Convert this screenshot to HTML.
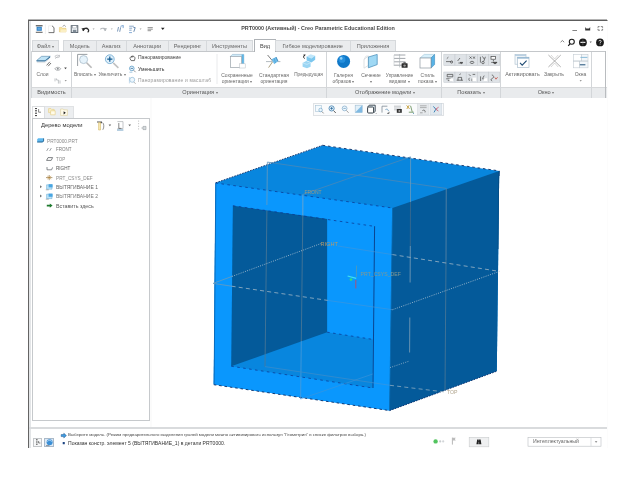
<!DOCTYPE html>
<html lang="ru"><head><meta charset="utf-8"><title>PRT0000 (Активный) - Creo Parametric Educational Edition</title>
<style>
*{box-sizing:border-box;margin:0;padding:0}
html,body{width:640px;height:480px;overflow:hidden;background:#fff}
body{position:relative;font-family:"Liberation Sans",sans-serif;font-size:5.5px;color:#555;line-height:1}
.a{position:absolute}
.t{position:absolute;white-space:nowrap}
#win{left:28px;top:20px;width:580px;height:428px;background:#fff;border-top:1px solid #5c5c5c;border-left:1px solid #646464;border-right:1px solid #fcfcfc}
.tab{position:absolute;top:40.4px;height:10.6px;background:#eaecee;border:1px solid #d6d9dc;border-bottom:none;text-align:center;padding-top:3px;font-size:5.6px;color:#666}
.tab.act{background:#fff;border-color:#aeb2b6;top:39px;height:13px;color:#444;padding-top:4px}
.sep{position:absolute;width:1px;background:#d3d6d9}
.gl{position:absolute;top:90px;font-size:5.6px;color:#555;text-align:center}
.d{font-size:3.6px;vertical-align:0.4px;color:#777}
.t,.lb,.gl,.tab{will-change:transform}
.lb{position:absolute;font-size:4.95px;color:#6a6a6a;text-align:center;white-space:nowrap}
</style></head><body>
<div id="win" class="a"></div>
<div class="a" style="left:28px;top:19px;width:579px;height:1px;background:#b4b4b4"></div>
<!-- left grey strip -->
<div class="a" style="left:29px;top:21px;width:2px;height:427px;background:#e3e5e7"></div>
<!-- title -->
<div class="t" style="left:238px;top:26.4px;width:160px;text-align:center;font-size:5.42px;font-weight:bold;color:#4a4a4a">PRT0000 (Активный) - Creo Parametric Educational Edition</div>
<!-- tabs row -->
<div class="a" style="left:31px;top:50.6px;width:575px;height:1px;background:#c4c7ca"></div>
<div class="tab" style="left:31.5px;width:27px">Файл <span class="d">▾</span></div>
<div class="tab" style="left:62.5px;width:33.5px">Модель</div>
<div class="tab" style="left:95.5px;width:30.5px">Анализ</div>
<div class="tab" style="left:125.5px;width:42.5px">Аннотации</div>
<div class="tab" style="left:167.5px;width:39px">Рендеринг</div>
<div class="tab" style="left:206px;width:47px">Инструменты</div>
<div class="tab act" style="left:253.5px;width:22px">Вид</div>
<div class="tab" style="left:275px;width:75.5px">Гибкое моделирование</div>
<div class="tab" style="left:350px;width:46px">Приложения</div>
<!-- ribbon label row -->
<div class="a" style="left:31px;top:87px;width:575.5px;height:11.2px;background:#e9ebed;border-top:1px solid #d6d8da"></div>
<div class="a" style="left:605.3px;top:51px;width:1px;height:47.2px;background:#b9bcbf"></div>
<div class="a" style="left:31.3px;top:51px;width:1px;height:47.2px;background:#d3d6d9"></div>
<div class="sep" style="left:71px;top:52px;height:46px"></div>
<div class="sep" style="left:326px;top:52px;height:46px"></div>
<div class="sep" style="left:441px;top:52px;height:46px"></div>
<div class="sep" style="left:500px;top:52px;height:46px"></div>
<div class="sep" style="left:591px;top:52px;height:46px"></div>
<div class="gl" style="left:32px;width:39px">Видимость</div>
<div class="gl" style="left:160px;width:80px">Ориентация <span class="d">▾</span></div>
<div class="gl" style="left:340px;width:90px">Отображение модели <span class="d">▾</span></div>
<div class="gl" style="left:445px;width:52px">Показать <span class="d">▾</span></div>
<div class="gl" style="left:520px;width:52px">Окно <span class="d">▾</span></div>

<!-- QAT + window controls + ribbon icons (SVG shapes only) -->
<svg class="a" style="left:0;top:0" width="640" height="100" viewBox="0 0 640 100">
 <!-- QAT -->
 <rect x="36" y="25.4" width="6.4" height="7.2" fill="#fff"/><rect x="35.8" y="25.3" width="6.8" height="1" fill="#333"/><rect x="35.8" y="31.8" width="6.8" height="0.9" fill="#444"/><rect x="36.6" y="26.8" width="5.2" height="4" fill="#2f7fc4"/><rect x="37.6" y="27.6" width="3.2" height="2.2" fill="#5fa6e0"/>
 <line x1="45.4" y1="24.5" x2="45.4" y2="34" stroke="#e6e6e6" stroke-width="0.6"/>
 <path d="M48.6 25.8h3.8l1.6 1.6v5.2h-5.4z" fill="#fff" stroke="#d6d6d6" stroke-width="0.4"/><path d="M52 25.8l2 1.9v4.9h-5.4" fill="none" stroke="#555" stroke-width="0.8"/>
 <path d="M59.4 27.4h2.4l0.7 0.9h3.5v3.6h-6.6z" fill="#f6e3a1" stroke="#e2c064" stroke-width="0.5"/><path d="M62.6 26.4l1.7-1.1 1.5 1.3" fill="none" stroke="#777" stroke-width="0.7"/><path d="M61 29.4h5.6l-0.8 2.5h-5.6z" fill="#fbefc4"/>
 <rect x="71.2" y="25.7" width="6.6" height="6.8" fill="#f2f5f8" stroke="#4a5560" stroke-width="0.9"/><rect x="72.6" y="25.8" width="3.8" height="2.2" fill="#fff" stroke="#6a7580" stroke-width="0.4"/><rect x="72.8" y="29.8" width="3.6" height="2.7" fill="#7f8b96"/>
 <path d="M83 30.8c0.6-2.6 3.6-3.4 5.2-1.4c0.9 1.2 0.3 2.4-0.6 2.6" fill="none" stroke="#2a2a2a" stroke-width="1.3"/><path d="M81.4 28.6l3.4-0.8l-0.9 3.4z" fill="#2a2a2a"/>
 <path d="M92.6 28.6h2l-1 1.2z" fill="#999"/>
 <path d="M105.6 30.8c-0.6-2.6-3.6-3.4-5.2-1.4" fill="none" stroke="#b5b9bd" stroke-width="1.2"/><path d="M107.2 28.6l-3.4-0.8l0.9 3.4z" fill="#b5b9bd"/>
 <path d="M110.8 28.6h2l-1 1.2z" fill="#aaa"/>
 <path d="M117.5 31.5l1-4.5m1.2 4.8l1-4.5" stroke="#5a7fa8" stroke-width="0.8" fill="none"/><path d="M120.5 26.3l2.8-0.8l-0.2 2.6" fill="none" stroke="#5a8fc8" stroke-width="0.8"/>
 <path d="M129.2 26.2h4.6m-4.6 2h3m-3 2h2.4" stroke="#6a8fb8" stroke-width="0.8"/><path d="M133.4 27.4l1.8 0.2l-1.4 4.2" stroke="#5a7fa8" stroke-width="0.9" fill="none"/><path d="M129 32.6h3" stroke="#5a8fc8" stroke-width="0.7"/>
 <path d="M139.6 28.6h2l-1 1.2z" fill="#999"/>
 <path d="M147.6 27.6h5.2m-5.2 1.6h5.2m-5.2 1.5h3.5" stroke="#666" stroke-width="0.7"/>
 <path d="M161 27.8h3.6l-1.8 2.3z" fill="#222"/>
 <!-- window controls -->
 <rect x="572.4" y="30" width="4.6" height="0.9" fill="#777"/>
 <path d="M585.2 27v3.6h5v-3.6l-1.1 1.5h-2.8z" fill="#333"/>
 <path d="M598 26.6h1.6m1.2 0h1.8v1.2m0 1v1.4h-1.4m-1.2 0h-2v-1.4m0-1v-1.2" stroke="#666" stroke-width="0.8" fill="none"/>
 <path d="M560.6 42.2l1.8-1.7l1.8 1.7" fill="none" stroke="#666" stroke-width="0.8"/>
 <circle cx="571.8" cy="41.8" r="2.5" fill="none" stroke="#1a1a1a" stroke-width="1.1"/><path d="M570 43.8l-1.8 2" stroke="#1a1a1a" stroke-width="1.2"/>
 <circle cx="582.9" cy="42.4" r="3.9" fill="#1a1a1a"/><rect x="580.4" y="41.8" width="5" height="1.1" fill="#fff"/><path d="M582.9 39.6v5.6" stroke="#888" stroke-width="0.5"/>
 <path d="M589.6 41.6h2.2l-1.1 1.3z" fill="#666"/>
 <circle cx="600" cy="42.4" r="3.9" fill="#1a1a1a"/><path d="M598.9 41.3c0-1.4 2.3-1.4 2.3 0c0 0.8-1.1 0.8-1.1 1.8" stroke="#fff" stroke-width="0.8" fill="none"/><rect x="599.7" y="43.7" width="0.8" height="0.8" fill="#fff"/>

 <!-- Visibility group -->
 <path d="M36.6 60.5l5-4.2h8.6l-5 4.2z" fill="#bfe3f6" stroke="#3b6f96" stroke-width="0.5"/><path d="M36.6 60.5h8.6l5-4.2v1.1l-5 4.2h-8.6z" fill="#2f6f9c"/><path d="M36.8 62.6h8l4.6-3.8" fill="none" stroke="#d9dcdf" stroke-width="0.8"/><path d="M46.6 65.4l3.2-3.6m-1.6 4.4l2.8-3.2" stroke="#333" stroke-width="0.7"/>
 <path d="M54.8 56.4c1.2-1.6 4-1.6 5.2 0c-1.2 1.6-4 1.6-5.2 0z" fill="none" stroke="#a9adb1" stroke-width="0.6"/><path d="M55 58.6l5-3.6" stroke="#a9adb1" stroke-width="0.6"/>
 <path d="M54.8 68.8c1.3-2 4.6-2 6 0c-1.4 2-4.7 2-6 0z" fill="none" stroke="#8c9094" stroke-width="0.7"/><circle cx="57.8" cy="68.8" r="1" fill="#8c9094"/>
 <path d="M64.2 67.6h2.6l-1.3 1.7z" fill="#444"/>
 <path d="M55 78.4v3m1.4-3v1.6h2v3.6m1.6-3.2v3.2" stroke="#a9adb1" stroke-width="0.7" fill="none"/>
 <path d="M64.6 80h2.2l-1.1 1.4z" fill="#999"/>

 <!-- Refit -->
 <path d="M77.6 66v-11.6h9.8" fill="none" stroke="#8d9499" stroke-width="0.9"/><circle cx="83.6" cy="59.6" r="4" fill="#e6f3fb" stroke="#9fb4c4" stroke-width="0.7"/><path d="M86.6 62.8l5 5" stroke="#b9b9b9" stroke-width="1.6"/>
 <!-- Zoom in -->
 <circle cx="109.8" cy="59.2" r="4.4" fill="#dff0fb" stroke="#6aa6cf" stroke-width="0.8"/><path d="M107.2 59.2h5.2m-2.6-2.6v5.2" stroke="#12598f" stroke-width="1.2"/><path d="M113.2 62.8l5.2 5" stroke="#c2c2c2" stroke-width="1.6"/>
 <!-- small icons -->
 <path d="M130 58.6c0-3 4.8-3.4 5 -0.4l-0.6 2.4h-3.2z" fill="#fff" stroke="#333" stroke-width="0.7"/><path d="M131.4 56.2v1.6m1.3-2v1.8" stroke="#333" stroke-width="0.5"/>
 <circle cx="131.8" cy="68.4" r="2.3" fill="#eaf5fc" stroke="#4a90c0" stroke-width="0.7"/><path d="M130.6 68.4h2.4" stroke="#1c5f93" stroke-width="0.7"/><path d="M133.6 70.2l2 2" stroke="#888" stroke-width="0.9"/><path d="M129.4 72.2h3" stroke="#4a90c0" stroke-width="0.5"/>
 <circle cx="132.2" cy="79.8" r="2.5" fill="#eef7fd" stroke="#8fb9d6" stroke-width="0.7"/><path d="M129.4 77v6.4" stroke="#9fc3dc" stroke-width="0.6"/><path d="M133.8 82l1.8 1.8" stroke="#aaa" stroke-width="0.9"/>
 <line x1="217" y1="54" x2="217" y2="84" stroke="#e3e5e7" stroke-width="0.8"/>
 <!-- Saved orientations -->
 <path d="M230.4 56.4l2-2h11.4v11l-2 2z" fill="#cfeaf8" stroke="#8db4cc" stroke-width="0.6"/><path d="M241.6 54.4h2.2v11l-2.2 2z" fill="#5fb4e2"/><rect x="230.4" y="56.6" width="11.2" height="10.8" fill="#fff" stroke="#9aa3ab" stroke-width="0.7"/><rect x="239.6" y="63.8" width="5.6" height="4.2" fill="#fff" stroke="#b5bcc2" stroke-width="0.5"/>
 <!-- Standard orientation -->
 <path d="M267.6 55l5 6" stroke="#444" stroke-width="0.7"/><path d="M266 61.6h14.4" stroke="#7f8c96" stroke-width="0.6"/><path d="M268.6 67.6l3.8-5.6" stroke="#8a7a4a" stroke-width="0.7"/><path d="M271.6 59.2l4.4-2.2l2 4.2l-3.8 3z" fill="#6fbdea"/><path d="M276 57l2 4.2" stroke="#2a78b0" stroke-width="0.8"/><path d="M274 58l1.6 5" stroke="#3f95cc" stroke-width="0.5"/>
 <!-- Previous -->
 <path d="M306.6 56.6l4-2.4l4.6 1.6l-3.8 2.8z" fill="#bfe6fa"/><path d="M306.6 56.6l4.8 2l3.8-2.8v4l-3.8 2.8l-4.8-2z" fill="#7cc7ee"/><path d="M302.6 63l3.6-2l4.4 1.6v4.2l-3.6 1.4l-4.4-1.4z" fill="#9ad5f3"/><path d="M302.6 63l4.4 1.4l3.6-1.8" fill="none" stroke="#d8effb" stroke-width="0.6"/><path d="M304.8 58.6c-1.6-0.6-1.8-2.6-0.4-3.4" fill="none" stroke="#222" stroke-width="0.8"/><path d="M303.4 54.4l2.2 0.2l-1 1.8z" fill="#222"/>
 <!-- Appearance gallery sphere -->
 <circle cx="343.6" cy="61.4" r="6.5" fill="#0f78c8"/><circle cx="342" cy="59.4" r="3.4" fill="#2a95e2" opacity="0.8"/><circle cx="341.2" cy="58.4" r="1.3" fill="#8fd0f8"/>
 <!-- Section -->
 <path d="M364 59.4l4.4-3.4v9.4l-4.4 2.8z" fill="#fff" stroke="#c8ccd0" stroke-width="0.6"/><path d="M368.4 57l8.8-2.6v10.2l-8.8 3.2z" fill="#9fd8f4" stroke="#3f87b5" stroke-width="0.7"/><path d="M364 59.4l2-3.4l2.4 0" fill="none" stroke="#c8ccd0" stroke-width="0.5"/>
 <!-- View manager -->
 <path d="M394 55h11.4m-11.4 3.4h11.4m-11.4 3.4h11.4m-11.4 3.4h8" stroke="#8a9197" stroke-width="0.8"/><path d="M399.6 54v13.4" stroke="#aeb4b9" stroke-width="0.7"/><path d="M394 55v11" stroke="#c5c9cd" stroke-width="0.6"/><rect x="401.6" y="63.2" width="6" height="4.6" rx="0.6" fill="#2e2e2e"/><circle cx="404.6" cy="65.6" r="1.2" fill="#9a9a9a"/><rect x="403.4" y="62.4" width="2.4" height="1" fill="#2e2e2e"/>
 <!-- Display style -->
 <path d="M420 58l4.2-3.6h10.4l-3.6 3.6z" fill="#d8f0fb" stroke="#8fbad2" stroke-width="0.5"/><path d="M431 58l3.6-3.6v10.2l-3.6 3.4z" fill="#58b3e6" stroke="#2f7fb2" stroke-width="0.5"/><rect x="420" y="58" width="11" height="10" fill="#fff" stroke="#8d97a0" stroke-width="0.7"/>
 <!-- Show grid -->
 <g fill="#dfe3e7" stroke="#c3c8cd" stroke-width="0.5">
  <rect x="443.8" y="54.2" width="11.2" height="11.4"/><rect x="455" y="54.2" width="11.2" height="11.4"/><rect x="466.2" y="54.2" width="11.2" height="11.4"/><rect x="477.4" y="54.2" width="11.2" height="11.4"/><rect x="488.6" y="54.2" width="11.2" height="11.4"/>
  <rect x="443.8" y="72" width="11.2" height="10.4"/><rect x="455" y="72" width="11.2" height="10.4"/><rect x="466.2" y="72" width="11.2" height="10.4"/><rect x="477.4" y="72" width="11.2" height="10.4"/><rect x="488.6" y="72" width="11.2" height="10.4"/>
 </g>
 <g stroke="#444" stroke-width="0.7" fill="none">
  <path d="M446 61.6h5.4m-4.6-3l1.6-1.4"/><circle cx="451.6" cy="62" r="1.1"/>
  <path d="M457.6 61l2.4-3m-1.6 5h4.6"/><path d="M460 62.4h2.6l-1.3 1.2z" fill="#333"/>
  <path d="M469.6 56.6l2 2m0-2l-2 2m3.6-2l1.6 2m0-2l-1.6 2"/><ellipse cx="472" cy="62.4" rx="1.8" ry="1.1"/>
  <path d="M480.4 56.8v5.8m2-6.2l1.8 2.6m1.2-2.2l-1.6 4.4"/><circle cx="483" cy="62.6" r="1.2"/>
  <rect x="491" y="56.4" width="4.6" height="2.8" fill="#fff"/><path d="M493.4 59.8v1.6m-2.2 1h6"/><path d="M493 62.4h4l-2 1.6z" fill="#333"/>
  <path d="M447.2 74.4h5.6v2.4h-5.6zm-1 4.4h4.6m-3 1.8h4.2"/><rect x="449.4" y="78.6" width="3.6" height="2.6" fill="#fff" stroke="none"/>
  <path d="M459.4 74.6l1.4-0.8m-2.8 6.6v-3h3.6v3m-5-0.2h6.4"/>
  <path d="M469 74.4l1.6 1.6m2-1.6h2.6m-5.6 3.4c-1 1-1 2 0 3m2.4-2.2v2.6"/><rect x="472.4" y="77.6" width="3.8" height="3.4" fill="#fff" stroke="none"/>
  <path d="M480.6 76.4v4.6m2-2.6l1.6-2.8m-2 3.2h3"/><rect x="483.8" y="78.2" width="3.4" height="2.8" fill="#fff" stroke="none"/>
  <path d="M491.8 75c2.4 0.4 2.4 2.8 0.4 3.4c-1.6 0.6-1.4 2.2 0 2.6"/><path d="M494.8 77.4l1.2 1.8l1.6-2" stroke="#c0392b"/>
 </g>
 <!-- Activate -->
 <rect x="515" y="54.6" width="11" height="9.6" fill="#f4f8fb" stroke="#a8bccb" stroke-width="0.6"/><rect x="515" y="54.6" width="11" height="1.3" fill="#b5cde0"/><rect x="517.4" y="57.2" width="11.6" height="10.4" fill="#fff" stroke="#9fb5c6" stroke-width="0.6"/><rect x="517.4" y="57.2" width="11.6" height="1.4" fill="#8fb4d0"/><path d="M520 62.8l2.2 2.4l4.4-4.6" fill="none" stroke="#1d4a73" stroke-width="1.1"/>
 <!-- Close -->
 <path d="M548.4 55l12.4 12m0-12l-12.4 12" stroke="#9a9a9a" stroke-width="0.8"/><path d="M551 55l3.6 4l3.6-4m-7.2 12l3.6-4l3.6 4" fill="none" stroke="#bdbdbd" stroke-width="0.6"/>
 <!-- Windows -->
 <rect x="573.6" y="54.4" width="8" height="6.4" fill="#fff" stroke="#c3ccd3" stroke-width="0.6"/><rect x="581.6" y="54.4" width="6.4" height="6.4" fill="#f3f7fa" stroke="#c3ccd3" stroke-width="0.6"/><rect x="573.6" y="61.6" width="6" height="6.2" fill="#fff" stroke="#c3ccd3" stroke-width="0.6"/><rect x="579.6" y="61.6" width="8.4" height="6.2" fill="#f3f7fa" stroke="#c3ccd3" stroke-width="0.6"/><path d="M580.4 57.4h7" stroke="#7fb6d6" stroke-width="0.9"/><path d="M579.8 64.8h5.6" stroke="#1e5079" stroke-width="1"/>
 <path d="M579.6 80.2h2.2l-1.1 1.4z" fill="#777"/>
</svg>
<!-- ribbon labels -->
<div class="lb" style="left:32px;top:72.5px;width:21px">Слои</div>
<div class="lb" style="left:72px;top:72.5px;width:26px">Вписать <span class="d">▾</span></div>
<div class="lb" style="left:98px;top:72.5px;width:28px">Увеличить <span class="d">▾</span></div>
<div class="t" style="left:138.4px;top:55px;font-size:5.02px;color:#444">Панорамирование</div>
<div class="t" style="left:138.4px;top:67px;font-size:5.05px;color:#333">Уменьшить</div>
<div class="t" style="left:138.4px;top:78.8px;font-size:4.9px;color:#999;letter-spacing:0.22px">Панорамирование и масштаб</div>
<div class="lb" style="left:217px;top:72.5px;width:40px;line-height:6.1px">Сохраненные<br>ориентации <span class="d">▾</span></div>
<div class="lb" style="left:254px;top:72.5px;width:40px;line-height:6.1px">Стандартная<br>ориентация</div>
<div class="lb" style="left:290px;top:72.7px;width:37px;font-size:4.7px">Предыдущая</div>
<div class="lb" style="left:327px;top:72.5px;width:33px;line-height:6.1px">Галерея<br>образов <span class="d">▾</span></div>
<div class="lb" style="left:357px;top:72.5px;width:28px;line-height:6.1px">Сечение<br><span class="d">▾</span></div>
<div class="lb" style="left:383px;top:72.5px;width:33px;line-height:6.1px">Управление<br>видами <span class="d">▾</span></div>
<div class="lb" style="left:413px;top:72.5px;width:29px;line-height:6.1px">Стиль<br>показа <span class="d">▾</span></div>
<div class="lb" style="left:503px;top:72.3px;width:39px;font-size:5.45px">Активировать</div>
<div class="lb" style="left:541px;top:72.4px;width:26px;font-size:5.2px">Закрыть</div>
<div class="lb" style="left:570px;top:72.5px;width:21px">Окна</div>


<!-- navigator -->
<div class="a" style="left:32px;top:105.5px;width:41.5px;height:13px;background:#eceef0;border:1px solid #e0e2e4;border-bottom:none"></div>
<div class="a" style="left:32px;top:105.5px;width:12.5px;height:13.5px;background:#fff;border:1px solid #dcdee0;border-bottom:none"></div>
<div class="a" style="left:31.5px;top:118.3px;width:118.5px;height:303px;background:#fff;border:1px solid #c6c9cc"></div>
<div class="a" style="left:150px;top:98px;width:1.5px;height:330px;background:#fbfbfb"></div>
<svg class="a" style="left:0;top:100px" width="160" height="120" viewBox="0 100 160 120">
 <!-- tab icons -->
 <path d="M35 108.6h2m-2 2.2h2m-2 2.4h2m-2 2.4h2" stroke="#333" stroke-width="1"/><path d="M38.6 109v3.2h2.4m-2.4 0v0" stroke="#555" stroke-width="0.7" fill="none"/>
 <path d="M48.6 108.6h2.4l0.6 0.8h2.6v3.2h-5.6z" fill="#fbf1cc" stroke="#e0c46a" stroke-width="0.5"/><path d="M50.6 110.8h4.6v4h-4.6z" fill="#fffbe8" stroke="#e0c46a" stroke-width="0.5"/>
 <path d="M60.6 109h2.6l0.6 0.8h3.6v5.6h-6.8z" fill="#fffbea" stroke="#d8c68a" stroke-width="0.5"/><path d="M63.6 111.2l2.2 1.6l-2.2 1.6z" fill="#222"/>
 <!-- tree toolbar -->
 <path d="M97 121.4h5v1.8h-1.4l-0.6-0.8h-3z" fill="#555"/><path d="M98.6 122.6h1.9v7.4h-1.9z" fill="#f9ebb4" stroke="#cfae52" stroke-width="0.5"/><path d="M102.6 122.6c1.6 1.2 1.6 5 0.2 7.2" fill="none" stroke="#666" stroke-width="0.7"/>
 <path d="M108.6 124.6h2.6l-1.3 1.6z" fill="#666"/>
 <path d="M117.4 121.6h5.6v7h-5.6" fill="none" stroke="#9aa0a5" stroke-width="0.6"/><path d="M118.8 123v5.4h2.6" stroke="#555" stroke-width="0.7" fill="none"/><path d="M117 130h6.4" stroke="#4d88b5" stroke-width="0.8"/>
 <path d="M128.4 124.6h2.6l-1.3 1.6z" fill="#666"/>
 <path d="M138.6 120.6v1m0 1.6v1m0 1.6v1m0 1.6v1" stroke="#aaa" stroke-width="0.8"/><path d="M143 126.4h3v3.2h-3z" fill="#d9dde0" stroke="#8a9096" stroke-width="0.5"/><path d="M141.4 128h1.6" stroke="#8a9096" stroke-width="0.6"/>
 <!-- tree icons -->
 <path d="M37.2 139.2l1-1h5.4v3l-1 1h-5.4z" fill="#5fb8ee"/><path d="M37.2 142h5.4l1-1v-2.6" stroke="#14507f" stroke-width="0.8" fill="none"/>
 <path d="M46.6 151l1.8-3m1.2 3l1.8-3" stroke="#7a7f85" stroke-width="0.7"/>
 <path d="M46.6 160.4l1.4-2.8h4.6l-1.4 2.8z" fill="none" stroke="#4a4f55" stroke-width="0.7"/>
 <path d="M47 167v2.8h4.6l1-2.4" fill="none" stroke="#5a5f65" stroke-width="0.7"/>
 <path d="M46 177.6h6.4m-3.2-2.6v5.2" stroke="#7a5a20" stroke-width="0.6"/><path d="M47.2 176l4 3.2m0-3.2l-4 3.2" stroke="#c98a2a" stroke-width="0.5"/>
 <path d="M40 185.2l2 1.5l-2 1.5z" fill="#777"/><path d="M40 194.6l2 1.5l-2 1.5z" fill="#777"/>
 <path d="M46.6 184.8h5.4v4.4h-5.4z" fill="#bfe4f8" stroke="#5fa6d2" stroke-width="0.5"/><path d="M48.6 184.2h4v3.2h-4z" fill="#49a6e2"/><path d="M45.8 189.8h3" stroke="#888" stroke-width="0.6"/>
 <path d="M46.6 194.2h5.4v4.4h-5.4z" fill="#bfe4f8" stroke="#5fa6d2" stroke-width="0.5"/><path d="M48.6 193.6h4v3.2h-4z" fill="#49a6e2"/><path d="M45.8 199.2h3" stroke="#888" stroke-width="0.6"/>
 <path d="M46.8 204.8h3v-1.4l2.8 2.2l-2.8 2.2v-1.4h-3z" fill="#1e7a2e"/>
</svg>
<div class="t" style="left:41px;top:122.6px;font-size:5.8px;color:#333">Дерево модели</div>
<div class="t" style="left:47px;top:139.6px;font-size:4.76px;color:#888">PRT0000.PRT</div>
<div class="t" style="left:56px;top:148.3px;font-size:4.5px;color:#777">FRONT</div>
<div class="t" style="left:56px;top:157.5px;font-size:4.5px;color:#888">TOP</div>
<div class="t" style="left:56px;top:167.4px;font-size:4.6px;color:#555">RIGHT</div>
<div class="t" style="left:56px;top:176.9px;font-size:4.7px;color:#888">PRT_CSYS_DEF</div>
<div class="t" style="left:56px;top:185.3px;font-size:5.03px;color:#666">ВЫТЯГИВАНИЕ 1</div>
<div class="t" style="left:56px;top:194.4px;font-size:5.03px;color:#777">ВЫТЯГИВАНИЕ 2</div>
<div class="t" style="left:56px;top:203.6px;font-size:5.3px;color:#555">Вставить здесь</div>


<!-- graphics toolbar -->
<div class="a" style="left:312.5px;top:102.5px;width:131px;height:13px;background:#fafbfc;border:0.6px solid #dfe2e5"></div>
<svg class="a" style="left:300px;top:98px" width="160" height="24" viewBox="300 98 160 24">
 <rect x="417.4" y="103.4" width="11.6" height="11.4" fill="#e6e9ec" stroke="#d3d8dc" stroke-width="0.5"/><rect x="430.2" y="103.4" width="11.6" height="11.4" fill="#e1e8ee" stroke="#cad3db" stroke-width="0.5"/>
 <rect x="315.6" y="105.4" width="6" height="6" fill="#f4fafe" stroke="#a9c3d6" stroke-width="0.6"/><circle cx="320.6" cy="110" r="1.8" fill="#eaf5fc" stroke="#6a9fc4" stroke-width="0.6"/><path d="M322 111.6l1.6 1.8" stroke="#777" stroke-width="0.8"/>
 <circle cx="331.6" cy="108.4" r="2.6" fill="#e6f3fb" stroke="#3f7fae" stroke-width="0.8"/><path d="M330.2 108.4h2.8m-1.4-1.4v2.8" stroke="#1c5f93" stroke-width="0.7"/><path d="M333.6 110.6l2.2 2.4" stroke="#666" stroke-width="1"/>
 <circle cx="344.6" cy="108.4" r="2.4" fill="#eef7fd" stroke="#7fa9c8" stroke-width="0.7"/><path d="M343.4 108.4h2.4" stroke="#4a86b3" stroke-width="0.6"/><path d="M346.4 110.4l2.2 2.4" stroke="#999" stroke-width="0.9"/>
 <rect x="355.2" y="105.2" width="7" height="7.4" fill="#e2f0f9" stroke="#9fbdd2" stroke-width="0.6"/><path d="M355.2 112.6l7-7.4v7.4z" fill="#7fb9e2"/>
 <path d="M367.6 107l1.6-1.8h6v6l-1.6 1.8" fill="#e8f4fb" stroke="#1f2a33" stroke-width="0.8"/><rect x="367.6" y="107" width="6" height="6" rx="0.8" fill="#fff" stroke="#1f2a33" stroke-width="0.9"/><path d="M375.6 113.2h1l-0.5 0.8z" fill="#333"/>
 <path d="M382 112.6v-6.4h5.4" fill="none" stroke="#7f8c96" stroke-width="0.8"/><path d="M385.4 109.6c1.4-1 3-0.2 3 1.4" fill="none" stroke="#4a86b3" stroke-width="0.7"/><path d="M387.2 113.4h1.8v-1.6" stroke="#333" stroke-width="0.7" fill="none"/>
 <path d="M394 106.2h7m-7 1.8h7m-7 1.8h4" stroke="#9aa0a5" stroke-width="0.6"/><rect x="396.8" y="109" width="5" height="3.8" fill="#333"/><circle cx="399.3" cy="111" r="1" fill="#aaa"/>
 <path d="M406.6 105.4l3 3.6m-0.4-3.8l-2.4 3.8" stroke="#b8860b" stroke-width="0.7"/><path d="M410.6 105.8l1.6 6m-3.4 0.4h5" stroke="#4a7a3a" stroke-width="0.7"/><path d="M412.8 112.8l1.2 1.2" stroke="#3f7fae" stroke-width="0.7"/>
 <path d="M420 105.8h6.6m-6.6 1.8h6.6" stroke="#888" stroke-width="0.6"/><path d="M422.4 110.6c1.6-1.2 3.4 0 2.6 1.8" fill="none" stroke="#444" stroke-width="0.7"/><path d="M420 112.8h2.6" stroke="#777" stroke-width="0.6"/>
 <path d="M433.4 106.4l2.4 2.8l-1.8 3.2" fill="none" stroke="#2a78b0" stroke-width="0.9"/><path d="M435.8 109.2l2.8-2m-2.8 2l2.6 1.8" stroke="#c8506a" stroke-width="0.8" fill="none"/>
</svg>
<!-- 3D model -->
<svg class="a" style="left:150px;top:98px" width="458" height="330" viewBox="150 98 458 330">
 <!-- silhouette underlay -->
 <polygon points="215.5,183 322.6,145.4 499.25,171 496.8,371 389.6,410.4 213.75,384.5" fill="#0886de"/>
 <!-- front face -->
 <polygon points="215.5,183 392.5,208 389.6,410.4 213.75,384.5" fill="#0a97fd"/>
 <!-- right face -->
 <polygon points="392.5,208 499.25,171 496.8,371 389.6,410.4" fill="#045a9a"/>
 <polygon points="392.9,208 392.1,208.2 389.2,410.3 390,410.3" fill="#0a6ab0"/>
 <!-- inner left wall + floor underlay -->
 <polygon points="232.9,205.7 327.1,218.9 327.1,332.2 372.75,339.4 372.9,388 231.25,366.25" fill="#0886de"/>
 <polygon points="232.9,205.7 327.1,218.9 327.1,332.2 231.25,366.25" fill="#045a9a"/>
 <!-- edges -->
 <g fill="none" stroke="#0c3a94" stroke-width="0.9" stroke-dasharray="2.6 3.4" opacity="0.85">
  <path d="M215.5,183 392.5,208"/>
  <path d="M232.9,205.7 374.8,226.4"/>
  <path d="M231.25,366.25 372.9,388"/>
  <path d="M327.1,332.2 372.75,339.4"/>
 </g>
 <g fill="none" stroke="#0a2c66" stroke-width="1" opacity="0.9">
  <path d="M215.7,182.8 322.6,145.3" stroke-dasharray="1.7 1.1"/>
  <path d="M322.6,145.3 499.25,170.9" stroke-dasharray="2.6 2.8"/>
  <path d="M213.75,384.7 389.6,410.6" stroke-dasharray="2.6 2.8"/>
  <path d="M389.6,410.6 496.8,371.2" stroke-dasharray="1.7 1.1"/>
 </g>
 <path d="M215.8,183.5 L214.1,384" stroke="#0b66b4" stroke-width="0.9" fill="none"/>
 <path d="M374.6,226.2 L373,388" stroke="#0a4590" stroke-width="1" fill="none"/>
 <path d="M499.25,171 L499.1,176" stroke="#0a3f78" stroke-width="1" fill="none"/><path d="M498.6,176 L498,249" stroke="#084a80" stroke-width="0.8" fill="none"/>

 <!-- datum planes -->
 <g fill="none" stroke-width="0.8">
  <path d="M267.4,162.1 L446.25,188.4" stroke="#4a88b8"/>
  <path d="M302.9,194.4 L410.6,156.9" stroke="#4a88b8"/>
  <path d="M267.4,162.1 L266.9,205" stroke="#6a9abc"/>
  <path d="M266.9,210.5 L265,366.6" stroke="#4f7896"/>
  <path d="M302.9,194.4 L302.8,215.5" stroke="#7aa6c6"/>
  <path d="M302.8,215.5 L301.3,341" stroke="#4f7896"/>
  <path d="M301.3,341 L300.6,399" stroke="#4a9ad8"/>
  <path d="M410.6,156.9 L410.5,202" stroke="#6a9abc"/>
  <path d="M410.5,202 L410.3,246" stroke="#3f6a8c"/>
  <path d="M410.3,246 L410.1,282.5" stroke="#7f9fb8"/>
  <path d="M409.8,317.5 L409.6,352.5" stroke="#7f9fb8"/>
  <path d="M446.25,188.4 L446,260" stroke="#5f86a4"/>
  <path d="M446,260 L445,391" stroke="#4f7896"/>
  <path d="M265,366.6 L372,382.6" stroke="#3f8cc8" stroke-width="0.7"/>
  <path d="M300.6,399 L372.7,374" stroke="#3f93d8" stroke-width="0.6"/>
  <path d="M372,382.6 L390,385.3" stroke="#4596d8" stroke-width="0.6"/>
  <path d="M390,385.3 L445,392" stroke="#9fb6c6" stroke-dasharray="4 3.2" stroke-width="0.7"/>
  <path d="M390,367.6 L409.5,361" stroke="#b5c7d4" stroke-dasharray="1 1.3" stroke-width="0.7"/>
  <!-- TOP plane -->
  <path d="M213.1,283.4 L232,276.4" stroke="#6a9abc"/>
  <path d="M232,276.4 L321,243.5" stroke="#b5c7d4" stroke-dasharray="1 1.3"/>
  <path d="M213.1,283.4 L231.6,286.2" stroke="#6a9abc"/>
  <path d="M231.6,286.2 L327.7,300.4" stroke="#9fb6c6" stroke-dasharray="4 3.2"/>
  <path d="M327.7,300.4 L392.5,309.7" stroke="#4596d8" stroke-width="0.6"/>
  <path d="M338,246 L392.5,254.6" stroke="#4596d8" stroke-width="0.6"/>
  <path d="M392.5,254.6 L499.4,271.4" stroke="#9fb6c6" stroke-dasharray="4 3.2"/>
  <path d="M392.5,309.7 L499.4,271.4" stroke="#b5c7d4" stroke-dasharray="1 1.3"/>
  <path d="M392.2,243 L430,229" stroke="#8fa9bc" stroke-dasharray="1 1.3" stroke-width="0.6" opacity="0"/>
 </g>
 <!-- csys -->
 <path d="M356.5,265.6 L356.4,277" stroke="#6f9a9a" stroke-width="0.6"/>
 <path d="M347.6,276 L356.2,278.4" stroke="#3fe0f0" stroke-width="1.2"/>
 <circle cx="351" cy="279.6" r="1.4" fill="#2fd880"/>
 <path d="M355.8,280 L355.8,288.4" stroke="#c04a6a" stroke-width="0.9"/>
 <text x="304.4" y="193.6" font-family="Liberation Sans, sans-serif" font-size="5" fill="#9c9a80">FRONT</text>
 <text x="320.5" y="245.8" font-family="Liberation Sans, sans-serif" font-size="5.6" fill="#b59a6a">RIGHT</text>
 <text x="360.6" y="275.6" font-family="Liberation Sans, sans-serif" font-size="5.15" fill="#86998f">PRT_CSYS_DEF</text>
 <text x="447" y="394" font-family="Liberation Sans, sans-serif" font-size="5.2" fill="#b0a48c">TOP</text>
</svg>


<!-- status bar -->
<div class="a" style="left:29px;top:427.2px;width:578px;height:2.2px;background:#d9dbdd"></div>
<div class="a" style="left:32.8px;top:437.8px;width:9.4px;height:9px;background:#f6f7f8;border:0.6px solid #c3c6c9"></div>
<div class="a" style="left:44.4px;top:437.8px;width:10px;height:9px;background:#dfeaf5;border:0.6px solid #a9b9c9"></div>
<svg class="a" style="left:0;top:425px" width="640" height="30" viewBox="0 425 640 30">
 <path d="M36 439.8h1.6m-1.6 2.2h1.6m-1.6 2.2h1.6" stroke="#333" stroke-width="0.9"/><path d="M38.6 441v2h1.8" stroke="#555" stroke-width="0.7" fill="none"/>
 <circle cx="49.6" cy="442.2" r="3" fill="#3b8fd6"/><path d="M47.2 441.6c1-1.6 3.8-1.6 4.8 0" stroke="#cfe6f8" stroke-width="0.7" fill="none"/><path d="M46 445.6h3.4" stroke="#555" stroke-width="0.6"/>
 <path d="M61.2 434.6h2.6v-1.3l2.6 2.3l-2.6 2.3v-1.3h-2.6z" fill="#3f9fe6" stroke="#1a4f86" stroke-width="0.5"/>
 <rect x="62.7" y="442" width="2.1" height="2.2" rx="0.5" fill="#1d4583"/>
 <circle cx="435.6" cy="441.4" r="2.2" fill="#52c45e"/><circle cx="440.2" cy="441.4" r="1.1" fill="#c9cdd0"/><circle cx="443.2" cy="441.4" r="1.1" fill="#d3d6d9"/>
 <path d="M452.4 437.6v7" stroke="#999" stroke-width="0.7"/><path d="M452.6 437.8h3.2l-1 1.3l1 1.3h-3.2z" fill="#bbb"/>
 <rect x="469.2" y="437.4" width="19.6" height="9.4" fill="#eff0f1" stroke="#c9ccce" stroke-width="0.6"/>
 <path d="M477.2 439.6h1.5v4.6h-2.3zm3.4 0h-1.5v4.6h2.3z" fill="#222"/><rect x="478.2" y="440.6" width="1.6" height="1.4" fill="#222"/>
 <rect x="528" y="437.4" width="73" height="8.8" fill="#fff" stroke="#b9bdc1" stroke-width="0.6"/><line x1="591" y1="437.4" x2="591" y2="446.2" stroke="#c9cdd1" stroke-width="0.6"/>
 <path d="M594.8 441.2h2.6l-1.3 1.6z" fill="#777"/>
</svg>
<div class="t" style="left:68.3px;top:433.2px;font-size:4.4px;color:#4a4a4a;letter-spacing:-0.03px">Выберите модель. (Режим предварительного выделения граней модели можно активизировать используя "Геометрия" в списке фильтров выбора.)</div>
<div class="t" style="left:68.3px;top:440.8px;font-size:5.06px;color:#333">Показан констр. элемент 5 (ВЫТЯГИВАНИЕ_1) в детали PRT0000.</div>
<div class="t" style="left:533px;top:439.4px;font-size:5.2px;color:#666">Интеллектуальный</div>

</body></html>
